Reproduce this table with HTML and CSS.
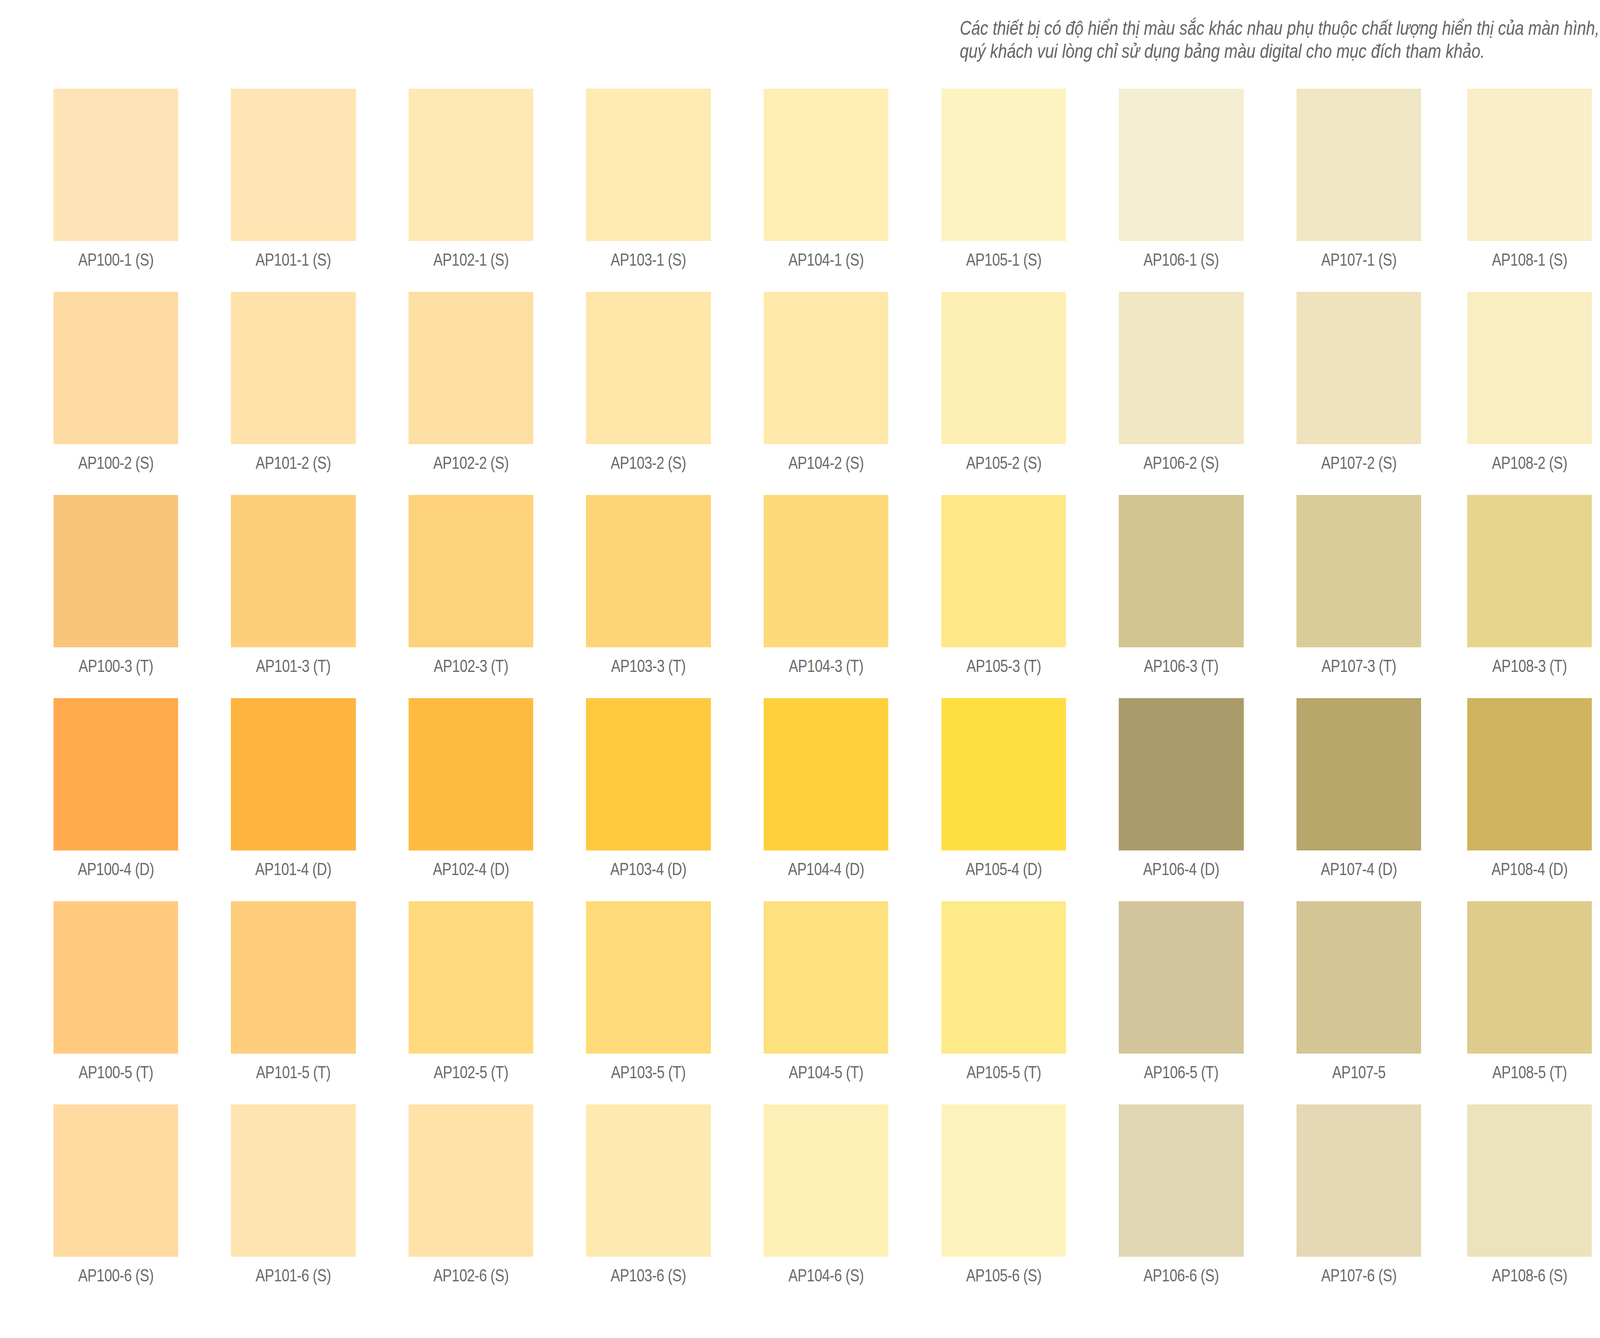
FILE: index.html
```html
<!DOCTYPE html>
<html lang="vi">
<head>
<meta charset="utf-8">
<title>Bảng màu AP100 – AP108</title>
<link rel="stylesheet" href="styles.css">
</head>
<body>
<div class="page">
  <p class="note">Các thiết bị có độ hiển thị màu sắc khác nhau phụ thuộc chất lượng hiển thị của màn hình,<br>quý khách vui lòng chỉ sử dụng bảng màu digital cho mục đích tham khảo.</p>
  <div class="palette">
    <div class="chip"><div class="swatch" style="background:#FEE3B6"></div><div class="label">AP100-1 (S)</div></div>
    <div class="chip"><div class="swatch" style="background:#FEE5B3"></div><div class="label">AP101-1 (S)</div></div>
    <div class="chip"><div class="swatch" style="background:#FEE8B3"></div><div class="label">AP102-1 (S)</div></div>
    <div class="chip"><div class="swatch" style="background:#FEEAB2"></div><div class="label">AP103-1 (S)</div></div>
    <div class="chip"><div class="swatch" style="background:#FEEDB4"></div><div class="label">AP104-1 (S)</div></div>
    <div class="chip"><div class="swatch" style="background:#FDF3C1"></div><div class="label">AP105-1 (S)</div></div>
    <div class="chip"><div class="swatch" style="background:#F5EED2"></div><div class="label">AP106-1 (S)</div></div>
    <div class="chip"><div class="swatch" style="background:#EFE6C4"></div><div class="label">AP107-1 (S)</div></div>
    <div class="chip"><div class="swatch" style="background:#F9EEC8"></div><div class="label">AP108-1 (S)</div></div>

    <div class="chip"><div class="swatch" style="background:#FDDAA2"></div><div class="label">AP100-2 (S)</div></div>
    <div class="chip"><div class="swatch" style="background:#FEE2AA"></div><div class="label">AP101-2 (S)</div></div>
    <div class="chip"><div class="swatch" style="background:#FDDFA3"></div><div class="label">AP102-2 (S)</div></div>
    <div class="chip"><div class="swatch" style="background:#FEE7A8"></div><div class="label">AP103-2 (S)</div></div>
    <div class="chip"><div class="swatch" style="background:#FEE9AA"></div><div class="label">AP104-2 (S)</div></div>
    <div class="chip"><div class="swatch" style="background:#FDF0B4"></div><div class="label">AP105-2 (S)</div></div>
    <div class="chip"><div class="swatch" style="background:#F0E6C4"></div><div class="label">AP106-2 (S)</div></div>
    <div class="chip"><div class="swatch" style="background:#EFE3BD"></div><div class="label">AP107-2 (S)</div></div>
    <div class="chip"><div class="swatch" style="background:#F9EDC2"></div><div class="label">AP108-2 (S)</div></div>

    <div class="chip"><div class="swatch" style="background:#F9C57A"></div><div class="label">AP100-3 (T)</div></div>
    <div class="chip"><div class="swatch" style="background:#FECF7B"></div><div class="label">AP101-3 (T)</div></div>
    <div class="chip"><div class="swatch" style="background:#FED17B"></div><div class="label">AP102-3 (T)</div></div>
    <div class="chip"><div class="swatch" style="background:#FED477"></div><div class="label">AP103-3 (T)</div></div>
    <div class="chip"><div class="swatch" style="background:#FED979"></div><div class="label">AP104-3 (T)</div></div>
    <div class="chip"><div class="swatch" style="background:#FEE888"></div><div class="label">AP105-3 (T)</div></div>
    <div class="chip"><div class="swatch" style="background:#D3C590"></div><div class="label">AP106-3 (T)</div></div>
    <div class="chip"><div class="swatch" style="background:#DACC98"></div><div class="label">AP107-3 (T)</div></div>
    <div class="chip"><div class="swatch" style="background:#E8D58C"></div><div class="label">AP108-3 (T)</div></div>

    <div class="chip"><div class="swatch" style="background:#FFAA4C"></div><div class="label">AP100-4 (D)</div></div>
    <div class="chip"><div class="swatch" style="background:#FFB440"></div><div class="label">AP101-4 (D)</div></div>
    <div class="chip"><div class="swatch" style="background:#FFBB40"></div><div class="label">AP102-4 (D)</div></div>
    <div class="chip"><div class="swatch" style="background:#FFC93F"></div><div class="label">AP103-4 (D)</div></div>
    <div class="chip"><div class="swatch" style="background:#FFD03C"></div><div class="label">AP104-4 (D)</div></div>
    <div class="chip"><div class="swatch" style="background:#FFDE40"></div><div class="label">AP105-4 (D)</div></div>
    <div class="chip"><div class="swatch" style="background:#AA9B6A"></div><div class="label">AP106-4 (D)</div></div>
    <div class="chip"><div class="swatch" style="background:#B8A66A"></div><div class="label">AP107-4 (D)</div></div>
    <div class="chip"><div class="swatch" style="background:#CEB45E"></div><div class="label">AP108-4 (D)</div></div>

    <div class="chip"><div class="swatch" style="background:#FFCA80"></div><div class="label">AP100-5 (T)</div></div>
    <div class="chip"><div class="swatch" style="background:#FECE7C"></div><div class="label">AP101-5 (T)</div></div>
    <div class="chip"><div class="swatch" style="background:#FED97D"></div><div class="label">AP102-5 (T)</div></div>
    <div class="chip"><div class="swatch" style="background:#FEDA78"></div><div class="label">AP103-5 (T)</div></div>
    <div class="chip"><div class="swatch" style="background:#FEE07F"></div><div class="label">AP104-5 (T)</div></div>
    <div class="chip"><div class="swatch" style="background:#FEEA88"></div><div class="label">AP105-5 (T)</div></div>
    <div class="chip"><div class="swatch" style="background:#D3C59B"></div><div class="label">AP106-5 (T)</div></div>
    <div class="chip"><div class="swatch" style="background:#D4C595"></div><div class="label">AP107-5</div></div>
    <div class="chip"><div class="swatch" style="background:#DFCB8B"></div><div class="label">AP108-5 (T)</div></div>

    <div class="chip"><div class="swatch" style="background:#FEDAA1"></div><div class="label">AP100-6 (S)</div></div>
    <div class="chip"><div class="swatch" style="background:#FEE4B0"></div><div class="label">AP101-6 (S)</div></div>
    <div class="chip"><div class="swatch" style="background:#FEE2A8"></div><div class="label">AP102-6 (S)</div></div>
    <div class="chip"><div class="swatch" style="background:#FEEAB0"></div><div class="label">AP103-6 (S)</div></div>
    <div class="chip"><div class="swatch" style="background:#FEF0B6"></div><div class="label">AP104-6 (S)</div></div>
    <div class="chip"><div class="swatch" style="background:#FEF3BD"></div><div class="label">AP105-6 (S)</div></div>
    <div class="chip"><div class="swatch" style="background:#E0D6B4"></div><div class="label">AP106-6 (S)</div></div>
    <div class="chip"><div class="swatch" style="background:#E4D8B5"></div><div class="label">AP107-6 (S)</div></div>
    <div class="chip"><div class="swatch" style="background:#EBE3BC"></div><div class="label">AP108-6 (S)</div></div>
  </div>
</div>
</body>
</html>
```

FILE: styles.css
```css
/* Horizontal measures: 1rem = 100 px of the 5001px-wide design.
   Vertical measures stay in px (the window keeps its full height). */
:root {
  font-size: calc(100vw / 50.01);
  --sx: 1;
}

@media (max-width: 4999px) {
  :root {
    --sx: 0.81904;
  }
}

html, body {
  margin: 0;
  padding: 0;
  background: #ffffff;
  overflow: hidden;
}

.page {
  width: 50.01rem;
  height: 3425px;
  overflow: hidden;
  font-family: "Liberation Sans", Arial, Helvetica, sans-serif;
}

.note {
  margin: 0 0 0 30rem;
  padding-top: 43px;
  font-size: 50px;
  line-height: 59px;
  font-style: italic;
  color: #656565;
  white-space: nowrap;
  transform-origin: 0 0;
  transform: scaleX(var(--sx));
}

.palette {
  margin: 66px 0 0 1.67rem;
  display: grid;
  grid-template-columns: repeat(7, 5.55rem) 5.34rem 3.9rem;
  row-gap: 57px;
}

.chip {
  width: 3.9rem;
  display: flex;
  flex-direction: column;
}

.swatch {
  width: 3.9rem;
  height: 390px;
}

.label {
  margin-top: 23px;
  font-size: 44px;
  line-height: 50px;
  letter-spacing: -0.6px;
  text-align: center;
  color: #6a6a6a;
  white-space: nowrap;
  transform-origin: 50% 0;
  transform: scaleX(var(--sx));
}
```
